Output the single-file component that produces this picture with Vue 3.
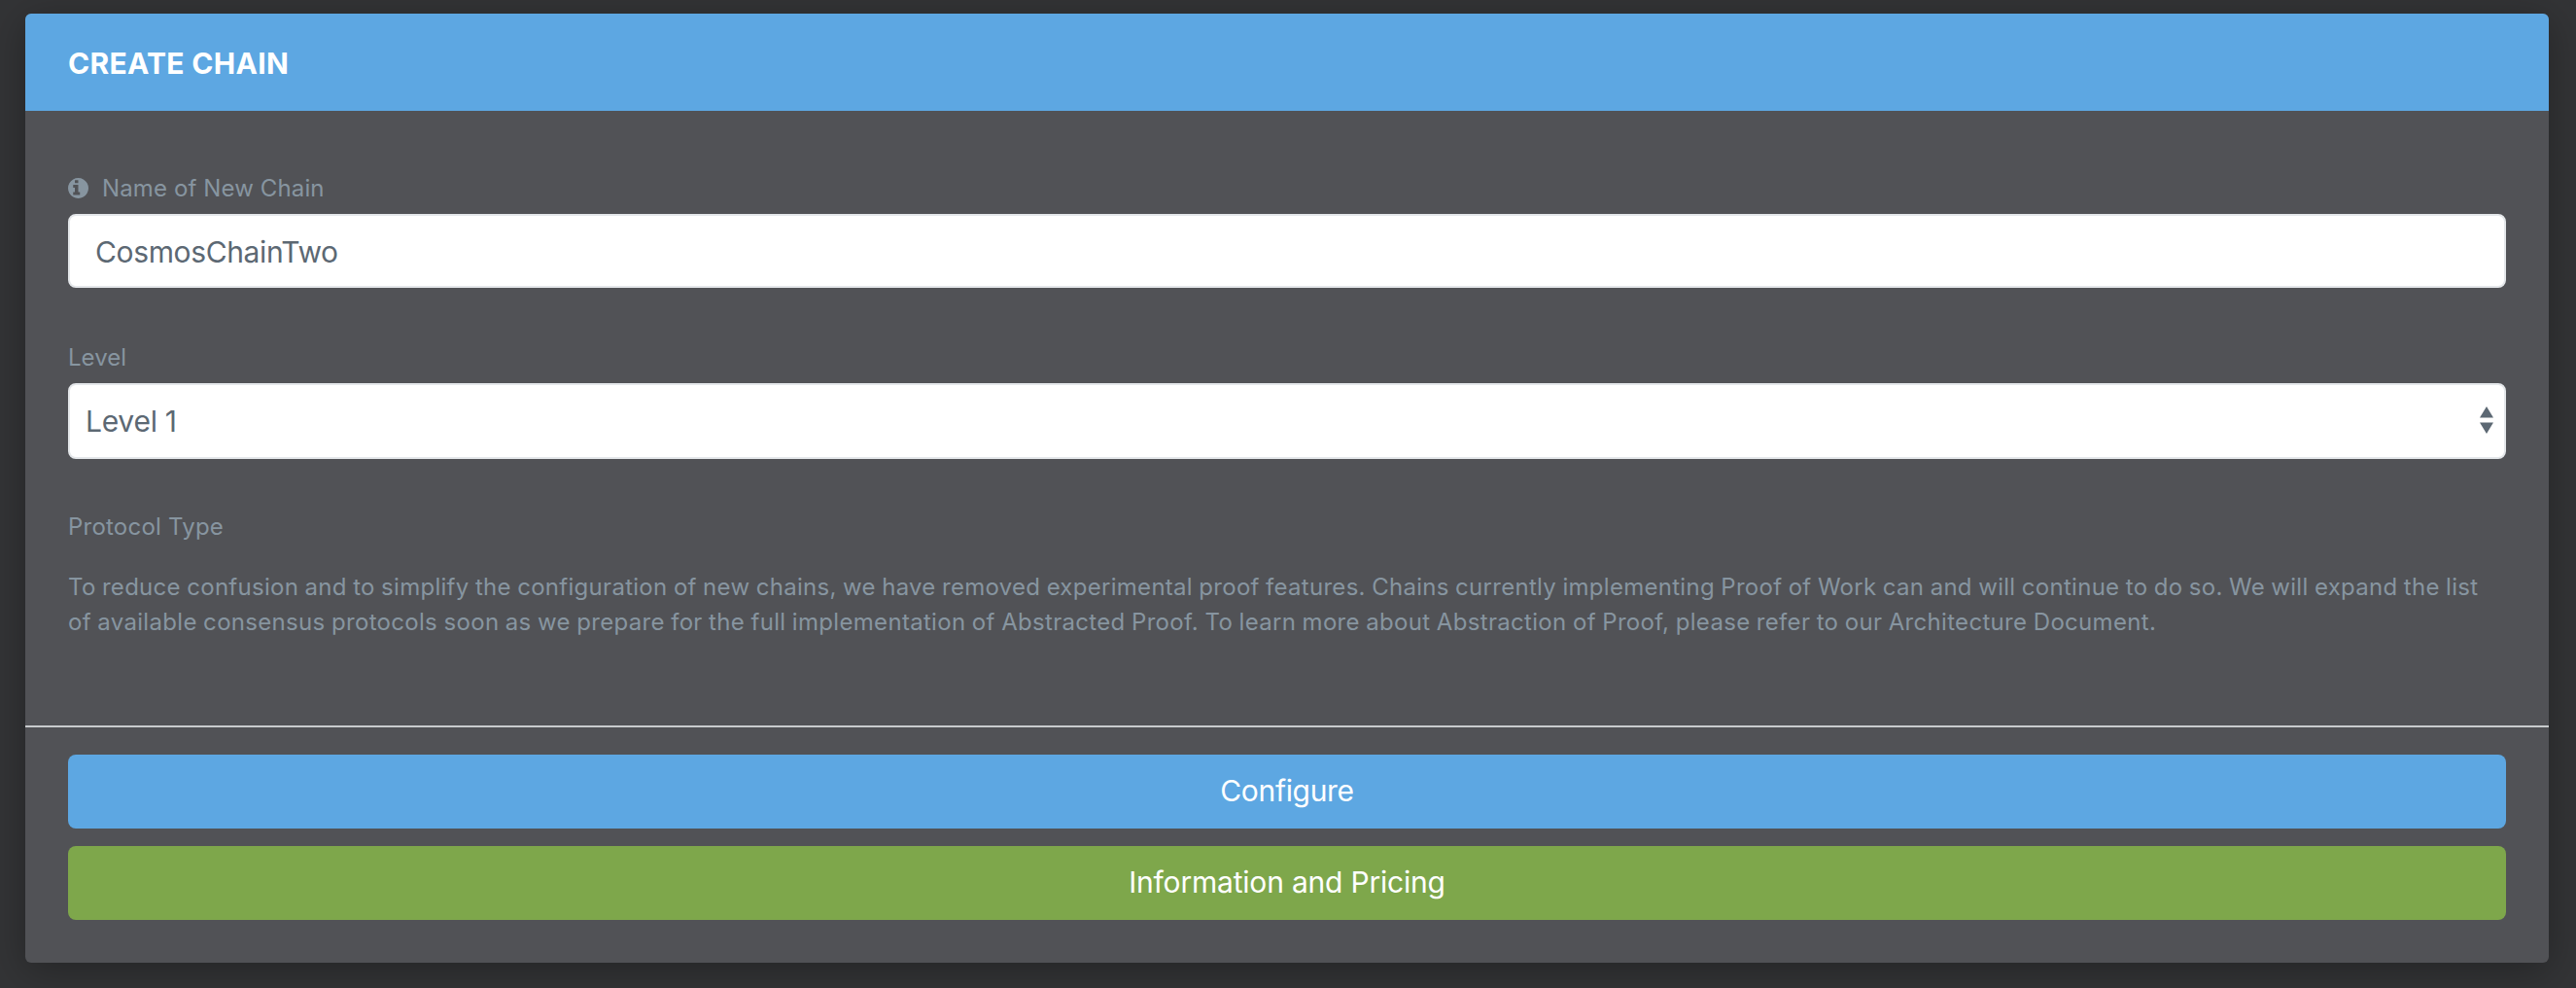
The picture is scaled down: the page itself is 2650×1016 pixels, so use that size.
<script setup>
import { ref } from 'vue'

const chain = ref('CosmosChainTwo')
const level = ref('Level 1')
</script>

<template>
  <main class="page">
    <section class="card">
      <header class="card-header"><h1 class="title">CREATE CHAIN</h1></header>
      <div class="card-body">
        <div class="field">
          <label class="label name-label">
            <svg class="info" viewBox="128 128 1536 1536" fill="currentColor">
              <path d="M1024 1376v-160q0-14-9-23t-23-9h-96v-512q0-14-9-23t-23-9h-320q-14 0-23 9t-9 23v160q0 14 9 23t23 9h96v320h-96q-14 0-23 9t-9 23v160q0 14 9 23t23 9h448q14 0 23-9t9-23zM896 480v-160q0-14-9-23t-23-9h-192q-14 0-23 9t-9 23v160q0 14 9 23t23 9h192q14 0 23-9t9-23zM1664 896q0 209-103 385.5t-279.5 279.5-385.5 103-385.5-103-279.5-279.5-103-385.5 103-385.5 279.5-279.5 385.5-103 385.5 103 279.5 279.5 103 385.5z" />
            </svg>
            <span>Name of New Chain</span>
          </label>
          <div class="control text"><span>{{ chain }}</span></div>
        </div>
        <div class="field level">
          <label class="label">Level</label>
          <div class="control select">
            <span>{{ level }}</span>
            <svg class="arrows" viewBox="0 0 14 28" fill="currentColor"><path d="M7 0l7 11.6H0zM7 28l7-11.6H0z" /></svg>
          </div>
        </div>
        <div class="protocol">
          <div class="label protocol-label">Protocol Type</div>
          <p class="note">
            <span>To reduce confusion and to simplify the configuration of new chains, we have removed experimental proof features. Chains currently implementing Proof of Work can and will continue to do so. We will expand the list</span><br>
            <span class="second">of available consensus protocols soon as we prepare for the full implementation of Abstracted Proof. To learn more about Abstraction of Proof, please refer to our Architecture Document.</span>
          </p>
        </div>
      </div>
      <footer class="card-footer">
        <button class="btn configure">Configure</button>
        <button class="btn pricing">Information and Pricing</button>
      </footer>
    </section>
  </main>
</template>

<style>
body { margin: 0; background: #333436; }
</style>
<style scoped>
* { box-sizing: border-box; }
.page { height: 1016px; padding: 14px 28px 26px 26px; background: #333436; overflow: hidden; font-family: Inter, "Liberation Sans", sans-serif; }
.card { height: 976px; display: flex; flex-direction: column; background: #515256; border-radius: 6px; box-shadow: 0 8px 40px rgba(0, 0, 0, 0.3); }
.card-header { height: 100px; padding: 2px 44px 0; display: flex; align-items: center; background: #5da7e2; border-radius: 6px 6px 0 0; }
.title { margin: 0; font-size: 30px; line-height: 36px; font-weight: 700; letter-spacing: 0.3px; color: #fff; }
.card-body { height: 632px; padding: 62px 44px 0; }
.label { display: flex; align-items: center; height: 36px; font-size: 24px; line-height: 36px; color: #8795a0; letter-spacing: 0.05px; }
.name-label { letter-spacing: 0.12px; }
.info { width: 21px; height: 21px; margin: 0 14px 2px 0; }
.control { display: flex; align-items: center; margin-top: 8px; height: 76px; border: 2px solid #e4e7ea; border-radius: 8px; background: #fff; color: #5c6873; font-size: 30px; line-height: 36px; }
.text { padding: 2px 26px 0; letter-spacing: -0.36px; }
.level { margin-top: 54px; }
.select { height: 78px; padding: 0 11px 0 16px; justify-content: space-between; letter-spacing: -0.25px; }
.arrows { width: 14px; height: 28px; margin-bottom: 2px; }
.protocol { margin-top: 52px; }
.protocol-label { letter-spacing: 0.22px; }
.note { margin: 26px 0 0; font-size: 24px; line-height: 36px; color: #8795a0; white-space: nowrap; letter-spacing: 0.282px; word-spacing: -0.65px; }
.second { letter-spacing: 0.312px; }
.card-footer { border-top: 2px solid #c8cbcd; padding: 28px 44px 44px; display: flex; flex-direction: column; gap: 18px; }
.btn { height: 76px; border: 0; border-radius: 8px; padding: 0 0 2px; color: #fff; font: 400 30px/36px Inter, "Liberation Sans", sans-serif; }
.configure { background: #5da7e2; letter-spacing: -0.33px; }
.pricing { background: #7ea74b; letter-spacing: -0.2px; }
</style>
